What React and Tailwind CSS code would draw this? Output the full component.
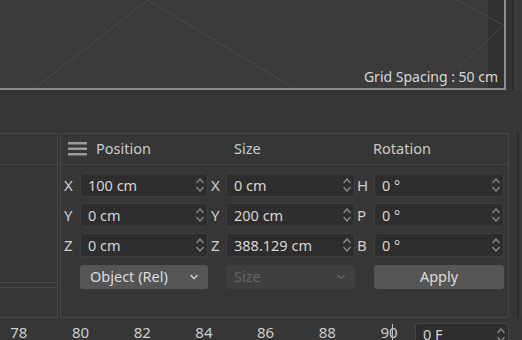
import React from "react";

const Spinner = ({ color = "#8c8c8c" }) => (
  <svg width="10" height="18" viewBox="0 0 10 18" fill="none">
    <path d="M1.5 7 L5 3 L8.5 7" stroke={color} strokeWidth="1.3" />
    <path d="M1.5 11 L5 15 L8.5 11" stroke={color} strokeWidth="1.3" />
  </svg>
);

const Chevron = ({ color = "#cfcfcf" }) => (
  <svg width="10" height="6" viewBox="0 0 10 6" fill="none">
    <path d="M1.5 1 L5 4.5 L8.5 1" stroke={color} strokeWidth="1.5" />
  </svg>
);

// one numeric field with its spinner
const Field = ({ value }) => (
  <div className="h-[24px] rounded-[3px] bg-[#2d2d2d] border border-[#3e3e3e] flex items-center pl-[7px] pr-[2px] text-[14.5px] text-[#d6d6d6]">
    <span className="flex-1 leading-none">{value}</span>
    <Spinner />
  </div>
);

const Label = ({ children, pad }) => (
  <div className={`h-[24px] flex items-center text-[15px] text-[#cfcfcf] ${pad}`}>{children}</div>
);

export default function App() {
  const rows = [
    ["X", "100 cm", "X", "0 cm", "H", "0 °"],
    ["Y", "0 cm", "Y", "200 cm", "P", "0 °"],
    ["Z", "0 cm", "Z", "388.129 cm", "B", "0 °"],
  ];
  const frames = ["78", "80", "82", "84", "86", "88", "90"];

  return (
    <div className="w-[522px] h-[340px] bg-[#363636] overflow-hidden flex flex-col font-['Noto_Sans','Open_Sans',sans-serif] select-none">
      {/* Viewport */}
      <div className="flex h-[90px] shrink-0">
        <div className="relative w-[506px] bg-[#3b3b3b] border-b-2 border-r-2 border-[#8d8d8d] flex">
          <svg className="absolute inset-0" width="504" height="88" viewBox="0 0 504 88">
            <g stroke="#4b4b4b" strokeWidth="1">
              <line x1="35" y1="88" x2="148" y2="0" />
              <line x1="148" y1="0" x2="294" y2="88" />
              <line x1="457" y1="0" x2="503" y2="25" />
              <line x1="503" y1="25" x2="458" y2="68" />
            </g>
          </svg>
          <div className="flex-1" />
          <div className="w-[16px] bg-[#313131]" />
          <span className="absolute right-[6px] bottom-[4px] text-[14px] text-[#d8d8d8] leading-none">
            Grid Spacing : 50 cm
          </span>
        </div>
        <div className="w-[6px]" />
        <div className="w-[2px] bg-[#2a2a2a]" />
        <div className="flex-1 bg-[#393939]" />
      </div>

      <div className="h-[43px] shrink-0" />

      {/* Panels */}
      <div className="flex h-[185px] shrink-0">
        <div className="w-[58px] border-t border-r border-b border-[#474747] flex flex-col">
          <div className="h-[31px] border-b border-[#474747]" />
          <div className="flex-1 border-b border-[#474747]" />
          <div className="h-[5px] border-b border-[#474747]" />
          <div className="h-[29px]" />
        </div>
        <div className="w-[2px]" />
        <div className="w-[449px] rounded-tl-[3px] border border-[#474747] flex flex-col">
          <div className="h-[31px] border-b border-[#474747] flex items-center pl-[7px] text-[14.5px] text-[#cbcbcb]">
            <svg width="19" height="14" viewBox="0 0 19 14">
              <g fill="#9b9b9b">
                <rect x="0" y="0" width="19" height="2.5" />
                <rect x="0" y="5.5" width="19" height="2.5" />
                <rect x="0" y="11" width="19" height="2.5" />
              </g>
            </svg>
            <span className="ml-[9px] w-[138px]">Position</span>
            <span className="w-[139px]">Size</span>
            <span>Rotation</span>
          </div>
          <div className="pt-[8px] pl-[3px] grid grid-cols-[16px_128px_18px_129px_19px_130px] gap-y-[6px]">
            {rows.map((r, i) => (
              <React.Fragment key={i}>
                <Label pad="pl-0">{r[0]}</Label>
                <Field value={r[1]} />
                <Label pad="pl-[3px]">{r[2]}</Label>
                <Field value={r[3]} />
                <Label pad="pl-[2px]">{r[4]}</Label>
                <Field value={r[5]} />
              </React.Fragment>
            ))}
            <div className="col-start-2 mt-[2px] h-[24px] rounded-[3px] bg-[#555555] flex items-center pl-[10px] pr-[9px] text-[14.5px] text-[#dcdcdc]">
              <span className="flex-1">Object (Rel)</span>
              <Chevron />
            </div>
            <div className="col-start-4 mt-[2px] h-[24px] rounded-[3px] bg-[#3f3f3f] flex items-center pl-[8px] pr-[9px] text-[14.5px] text-[#656565]">
              <span className="flex-1">Size</span>
              <Chevron color="#626262" />
            </div>
            <div className="col-start-6 mt-[2px] h-[24px] rounded-[3px] bg-[#565656] flex items-center justify-center text-[14.5px] text-[#dcdcdc]">
              Apply
            </div>
          </div>
        </div>
        <div className="w-[8px]" />
        <div className="w-[2px] bg-[#2a2a2a]" />
        <div className="flex-1 bg-[#393939]" />
      </div>

      {/* Timeline */}
      <div className="relative flex-1 flex items-center">
        <div className="flex ml-[-12px] pt-[6px]">
          {frames.map((f) => (
            <div key={f} className="w-[61.7px] text-center text-[15px] text-[#cdcdcd] leading-none">
              {f}
            </div>
          ))}
        </div>
        <div className="absolute left-[392px] top-[6px] bottom-0 w-px bg-[#bdbdbd]" />
        <div className="absolute left-[415px] top-[5px] w-[94px] h-[24px] rounded-[3px] bg-[#2d2d2d] border border-[#474747] flex items-center pl-[7px] pr-[2px] text-[14.5px] text-[#d6d6d6]">
          <span className="flex-1">0 F</span>
          <Spinner />
        </div>
      </div>
    </div>
  );
}
